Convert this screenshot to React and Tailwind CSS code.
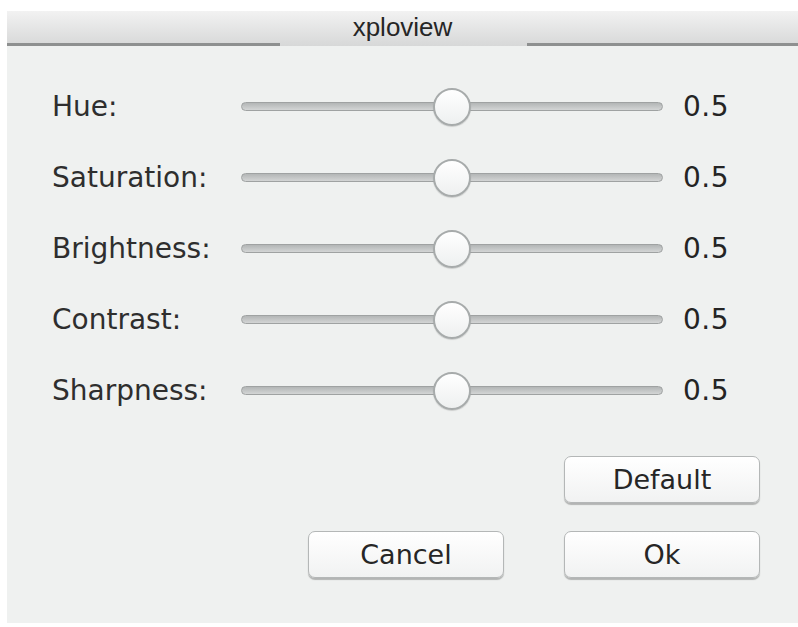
const rows = ['Hue:', 'Saturation:', 'Brightness:', 'Contrast:', 'Sharpness:'];

const Slider = () => (
  <div className="relative w-[422px] h-[38px] flex items-center">
    <div className="w-full h-[9px] rounded-full border border-[#9fa2a2] bg-gradient-to-b from-[#b3b6b6] to-[#d3d5d5]"></div>
    <div className="absolute left-[192px] top-0 w-[38px] h-[38px] rounded-full border-2 border-[#a7abab] bg-gradient-to-b from-[#ffffff] to-[#eef0f0] shadow-[0_1px_1px_rgba(0,0,0,0.15)]"></div>
  </div>
);

const Button = ({ children }) => (
  <button className="w-[196px] h-[47px] rounded-[7px] border border-[#b4b7b7] bg-gradient-to-b from-[#ffffff] to-[#f1f2f2] shadow-[0_2px_1px_rgba(0,0,0,0.25)] text-[27px] text-[#262626] leading-none">
    {children}
  </button>
);

export default function App() {
  return (
    <div className="w-[798px] h-[627px] bg-white pt-[11px] pl-[7px] pb-[4px] overflow-hidden" style={{ fontFamily: '"DejaVu Sans", sans-serif' }}>
      <div className="w-full h-full flex flex-col bg-[#eff1f0]">
        <div className="relative h-[35px] bg-gradient-to-b from-[#f2f2f2] to-[#d7d8d8] flex items-end">
          <div className="w-[273px] h-[3px] bg-[#8e9090]"></div>
          <div className="flex-1"></div>
          <div className="w-[271px] h-[3px] bg-[#8e9090]"></div>
          <div className="absolute inset-0 flex items-center justify-center pb-[2px] text-[26px] text-[#262626]" style={{ fontFamily: '"Liberation Sans", sans-serif' }}>
            xploview
          </div>
        </div>

        <div className="pt-[25px] pl-[45px] pr-[38px] flex flex-col">
          {rows.map((label) => (
            <div key={label} className="h-[71px] flex items-center">
              <div className="w-[189px] text-[28px] text-[#2e2e2e] leading-none">{label}</div>
              <Slider />
              <div className="ml-[20px] text-[28px] text-[#242424] leading-none tracking-[0.5px]">0.5</div>
            </div>
          ))}

          <div className="mt-[30px] flex justify-end">
            <Button>Default</Button>
          </div>
          <div className="mt-[28px] flex justify-end gap-[60px]">
            <Button>Cancel</Button>
            <Button>Ok</Button>
          </div>
        </div>
      </div>
    </div>
  );
}
